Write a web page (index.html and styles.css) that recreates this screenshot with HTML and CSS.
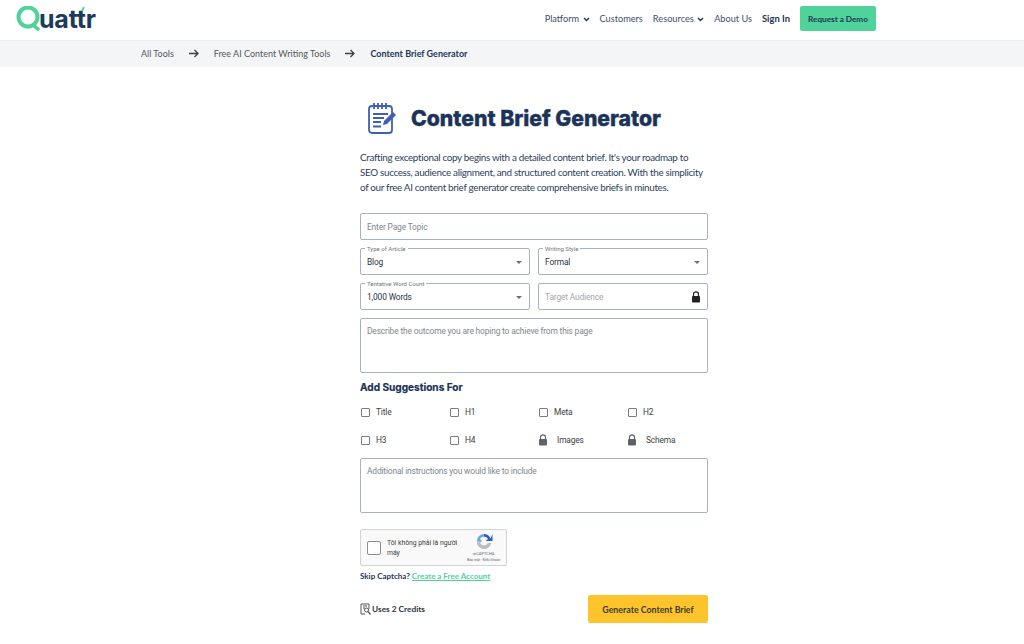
FILE: index.html
```html
<!DOCTYPE html>
<html lang="en">
  <head>
    <meta charset="UTF-8" />
    <meta name="viewport" content="width=device-width, initial-scale=1.0" />
    <title>Content Brief Generator</title>
    <link rel="stylesheet" href="styles.css">
  </head>
  <body>
    <header class="site-header">
      <a class="logo" href="#">
        <svg class="logo-q" width="27" height="25" viewBox="0 0 27 25">
          <circle cx="12" cy="11" r="9.500" fill="none" stroke="#4fd39a" stroke-width="4"/>
          <path d="M16 18l7 6" fill="none" stroke="#4fd39a" stroke-width="3.600"/>
        </svg>
        <span>uattr</span>
      </a>
      <nav class="main-nav">
        <a href="#">Platform <svg class="caret" width="7" height="5" viewBox="0 0 7 5"><path d="M1 1l2.500 2.500L6 1" fill="none" stroke="#1f3557" stroke-width="1.400"/></svg></a>
        <a href="#">Customers</a>
        <a href="#">Resources <svg class="caret" width="7" height="5" viewBox="0 0 7 5"><path d="M1 1l2.500 2.500L6 1" fill="none" stroke="#1f3557" stroke-width="1.400"/></svg></a>
        <a href="#">About Us</a>
        <a class="sign-in" href="#">Sign In</a>
        <a class="demo-btn" href="#">Request a Demo</a>
      </nav>
    </header>

    <div class="breadcrumb">
      <a href="#">All Tools</a>
      <svg class="arrow" width="10" height="9" viewBox="0 0 10 9"><path d="M0 4.500h9M5.500 1l3.500 3.500L5.500 8" fill="none" stroke="#3c4043" stroke-width="1.300"/></svg>
      <a href="#">Free AI Content Writing Tools</a>
      <svg class="arrow" width="10" height="9" viewBox="0 0 10 9"><path d="M0 4.500h9M5.500 1l3.500 3.500L5.500 8" fill="none" stroke="#3c4043" stroke-width="1.300"/></svg>
      <span class="current">Content Brief Generator</span>
    </div>

    <main class="tool">
      <div class="tool-title">
        <svg width="30" height="32" viewBox="0 0 30 32">
          <rect x="1" y="4" width="23" height="27" rx="3" fill="none" stroke="#3f5fb5" stroke-width="1.800"/>
          <path d="M6 1v6M10 1v6M14 1v6M18 1v6" stroke="#3f5fb5" stroke-width="1.800"/>
          <path d="M5 12h15M5 16h11M5 20h8M5 24.500h8" stroke="#3f5fb5" stroke-width="1.800"/>
          <path d="M15 23l1-4 9-9 3 3-9 9z" fill="#3f5fb5"/>
        </svg>
        <h1>Content Brief Generator</h1>
      </div>

      <p class="intro">Crafting exceptional copy begins with a detailed content brief. It's your roadmap to SEO success, audience alignment, and structured content creation. With the simplicity of our free AI content brief generator create comprehensive briefs in minutes.</p>

      <form class="brief-form">
        <div class="field single">Enter Page Topic</div>
        <div class="field-row">
          <div class="field select"><label>Type of Article</label><span>Blog</span><i class="drop"></i></div>
          <div class="field select"><label>Writing Style</label><span>Formal</span><i class="drop"></i></div>
        </div>
        <div class="field-row">
          <div class="field select"><label>Tentative Word Count</label><span>1,000 Words</span><i class="drop"></i></div>
          <div class="field locked">Target Audience
            <svg width="10" height="12" viewBox="0 0 10 12"><path d="M2.500 5V3.300a2.500 2.500 0 0 1 5 0V5" fill="none" stroke="#222" stroke-width="1.200"/><rect x="1" y="5" width="8" height="6.500" rx="1" fill="#222"/></svg>
          </div>
        </div>
        <div class="field area">Describe the outcome you are hoping to achieve from this page</div>

        <h3>Add Suggestions For</h3>
        <div class="suggest-grid">
          <div class="opt"><i class="box"></i>Title</div>
          <div class="opt"><i class="box"></i>H1</div>
          <div class="opt"><i class="box"></i>Meta</div>
          <div class="opt"><i class="box"></i>H2</div>
          <div class="opt"><i class="box"></i>H3</div>
          <div class="opt"><i class="box"></i>H4</div>
          <div class="opt lock"><svg width="10" height="12" viewBox="0 0 10 12"><path d="M2.500 5V3.300a2.500 2.500 0 0 1 5 0V5" fill="none" stroke="#5f6368" stroke-width="1.200"/><rect x="1" y="5" width="8" height="6.500" rx="1" fill="#5f6368"/></svg>Images</div>
          <div class="opt lock"><svg width="10" height="12" viewBox="0 0 10 12"><path d="M2.500 5V3.300a2.500 2.500 0 0 1 5 0V5" fill="none" stroke="#5f6368" stroke-width="1.200"/><rect x="1" y="5" width="8" height="6.500" rx="1" fill="#5f6368"/></svg>Schema</div>
        </div>
        <div class="field area extra">Additional instructions you would like to include</div>

        <div class="captcha">
          <i class="captcha-box"></i>
          <span class="captcha-text">Tôi không phải là người máy</span>
          <div class="captcha-brand">
            <svg width="18" height="18" viewBox="0 0 18 18">
              <path d="M9 2a7 7 0 0 1 6.500 4.500L17.500 2v7h-7l2.500-2A4.500 4.500 0 0 0 9 4.500z" fill="#2f5fc4"/>
              <path d="M2 9a7 7 0 0 1 7-7v2.500A4.500 4.500 0 0 0 5 7l2 2z" fill="#6aa5e8"/>
              <path d="M2 9h5l-2 2a4.500 4.500 0 0 0 8 0h3a7 7 0 0 1-14-2z" fill="#b9bdc2"/>
            </svg>
            <span class="captcha-name">reCAPTCHA</span>
            <span class="captcha-links">Bảo mật - Điều khoản</span>
          </div>
        </div>
        <p class="skip">Skip Captcha? <a href="#">Create a Free Account</a></p>

        <div class="form-foot">
          <div class="credits">
            <svg width="11" height="12" viewBox="0 0 11 12"><path d="M9 6V1H1v10h4" fill="none" stroke="#555" stroke-width="1"/><path d="M3 3h4M3 5h2" stroke="#555" stroke-width="1"/><circle cx="6.500" cy="7" r="2" fill="none" stroke="#555"/><path d="M8 8.500l2.500 3" stroke="#555" stroke-width="1.200"/></svg>
            Uses 2 Credits
          </div>
          <button class="generate" type="button">Generate Content Brief</button>
        </div>
      </form>
    </main>
  </body>
</html>
```

FILE: styles.css
```css
* {
  box-sizing: border-box;
}

body {
  margin: 0;
  background-color: white;
  color: #1f3557;
  font-family: "Lato", "Noto Sans", sans-serif;
  overflow: hidden;
}

a {
  color: inherit;
  text-decoration: none;
}

.site-header {
  display: flex;
  justify-content: space-between;
  align-items: flex-start;
  height: 41px;
  padding: 6px 148px 0 16px;
  border-bottom: 1px solid #e9ebee;
}

.logo {
  display: flex;
  align-items: flex-start;
  color: #1b3a5c;
  font-family: "Inter", sans-serif;
  font-size: 25px;
  font-weight: 700;
  line-height: 24px;
}

.logo span {
  position: relative;
  margin: 1px 0 0 -4px;
  letter-spacing: -0.2px;
}

.logo span::after {
  content: "";
  position: absolute;
  top: 0;
  right: 12px;
  width: 2px;
  height: 4px;
  background-color: #4fd39a;
  transform: rotate(25deg);
}

.main-nav {
  display: flex;
  align-items: center;
  gap: 10px;
  height: 25px;
  font-size: 9.200px;
  color: #3d4f6b;
}

.caret {
  margin-left: 1px;
}

.sign-in {
  color: #1f3557;
  font-size: 9.400px;
  font-weight: 700;
}

.demo-btn {
  display: flex;
  align-items: center;
  justify-content: center;
  width: 76px;
  height: 25px;
  border-radius: 2px;
  background-color: #4fd39a;
  color: #1f3557;
  font-size: 8.200px;
  font-weight: 700;
}

.breadcrumb {
  display: flex;
  align-items: center;
  height: 26px;
  padding: 0 0 2px 141px;
  background-color: #f4f5f7;
  color: #55585e;
  font-size: 9px;
}

.arrow {
  margin: 0 15px;
}

.current {
  color: #1f3557;
  font-weight: 700;
}

.tool {
  width: 348px;
  margin-left: 360px;
}

.tool-title {
  display: flex;
  align-items: center;
  gap: 13px;
  padding: 35px 0 0 8px;
}

.tool-title h1 {
  margin: 0;
  color: #1b3358;
  font-family: "Inter", sans-serif;
  font-size: 21.200px;
  font-weight: 800;
  line-height: 32px;
  -webkit-text-stroke: 0.4px #1b3358;
}

.intro {
  margin: 16px 0 0;
  color: #2b3f5c;
  font-size: 9.900px;
  letter-spacing: -0.33px;
  line-height: 15px;
}

.brief-form {
  margin-top: 18px;
  font-family: "Roboto", sans-serif;
}

.field {
  position: relative;
  display: flex;
  align-items: center;
  height: 27px;
  padding: 0 6px;
  border: 1px solid #a9b1bd;
  border-radius: 2px;
  color: #80868e;
  font-size: 8.400px;
  letter-spacing: -0.15px;
}

.field-row {
  display: grid;
  grid-template-columns: 1fr 1fr;
  gap: 8px;
  margin-top: 8px;
}

.field label {
  position: absolute;
  top: -4px;
  left: 4px;
  padding: 0 2px;
  background-color: white;
  color: #70757c;
  font-size: 6px;
  letter-spacing: 0;
  line-height: 7px;
}

.select {
  color: #2c3440;
}

.drop {
  position: absolute;
  top: 12px;
  right: 7px;
  border-top: 3px solid #6b7077;
  border-right: 3px solid transparent;
  border-left: 3px solid transparent;
}

.locked {
  justify-content: space-between;
  padding-right: 6px;
  color: #a4a8ae;
}

.area {
  align-items: flex-start;
  height: 55px;
  margin-top: 8px;
  padding-top: 7px;
}

h3 {
  margin: 8px 0 0;
  color: #1b3358;
  font-family: "Inter", sans-serif;
  font-size: 10.100px;
  font-weight: 700;
  line-height: 13px;
  -webkit-text-stroke: 0.2px #1b3358;
}

.suggest-grid {
  display: grid;
  grid-template-columns: repeat(4, 89px);
  grid-auto-rows: 12px;
  row-gap: 16px;
  margin-top: 12px;
}

.opt {
  display: flex;
  align-items: center;
  color: #3c4043;
  font-size: 8.400px;
  letter-spacing: -0.15px;
}

.box {
  width: 9px;
  height: 9px;
  margin: 0 6px 0 1px;
  border: 1px solid #7a7e84;
  border-radius: 1px;
}

.lock svg {
  margin-right: 9px;
}

.extra {
  margin-top: 12px;
}

.captcha {
  position: relative;
  display: flex;
  align-items: center;
  width: 147px;
  height: 37px;
  margin-top: 16px;
  padding-left: 6px;
  border: 1px solid #d3d3d3;
  border-radius: 2px;
  background-color: #f9f9f9;
  color: #3c3c3c;
}

.captcha-box {
  flex: none;
  width: 14px;
  height: 14px;
  border: 1px solid #8b8b8b;
  border-radius: 2px;
  background-color: white;
}

.captcha-text {
  width: 76px;
  margin-left: 6px;
  font-size: 6.800px;
  line-height: 10px;
}

.captcha-brand {
  display: flex;
  flex-direction: column;
  align-items: center;
  margin-left: 4px;
  color: #666;
}

.captcha-name {
  font-size: 4px;
  line-height: 7px;
}

.captcha-links {
  font-size: 3.500px;
  line-height: 6px;
  white-space: nowrap;
}

.skip {
  margin: 5px 0 0;
  color: #1f3557;
  font-family: "Lato", sans-serif;
  font-size: 8px;
  font-weight: 700;
  line-height: 10px;
}

.skip a {
  color: #4fd39a;
  text-decoration: underline;
}

.form-foot {
  display: flex;
  justify-content: space-between;
  align-items: center;
  margin-top: 14px;
}

.credits {
  display: flex;
  align-items: center;
  gap: 1px;
  color: #2c3440;
  font-family: "Lato", sans-serif;
  font-size: 8.300px;
  font-weight: 700;
}

.generate {
  width: 120px;
  height: 28px;
  border: none;
  border-radius: 2px;
  background-color: #ffc42c;
  color: #3c3a30;
  font-family: "Lato", sans-serif;
  font-size: 8.800px;
  font-weight: 700;
  cursor: pointer;
}
```
